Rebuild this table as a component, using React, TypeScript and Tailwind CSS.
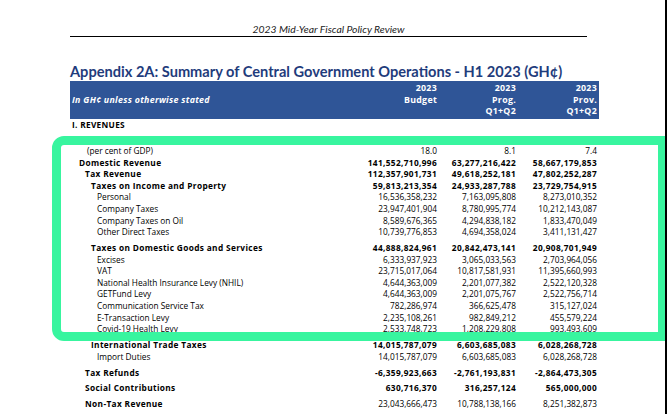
import React from "react"

type Row = {
    label: string
    indent: string
    bold?: boolean
    boldNums?: boolean
    gap?: boolean
    values: [string, string, string]
}

const rows: Row[] = [
    { label: "(per cent of GDP)", indent: "pl-[17px]", values: ["18.0", "8.1", "7.4"] },
    { label: "Domestic Revenue", indent: "pl-[9px]", bold: true, boldNums: true, values: ["141,552,710,996", "63,277,216,422", "58,667,179,853"] },
    { label: "Tax Revenue", indent: "pl-[15px]", bold: true, boldNums: true, values: ["112,357,901,731", "49,618,252,181", "47,802,252,287"] },
    { label: "Taxes on Income and Property", indent: "pl-[21px]", bold: true, boldNums: true, values: ["59,813,213,354", "24,933,287,788", "23,729,754,915"] },
    { label: "Personal", indent: "pl-[27px]", values: ["16,536,358,232", "7,163,095,808", "8,273,010,352"] },
    { label: "Company Taxes", indent: "pl-[27px]", values: ["23,947,401,904", "8,780,995,774", "10,212,143,087"] },
    { label: "Company Taxes on Oil", indent: "pl-[27px]", values: ["8,589,676,365", "4,294,838,182", "1,833,470,049"] },
    { label: "Other Direct Taxes", indent: "pl-[27px]", values: ["10,739,776,853", "4,694,358,024", "3,411,131,427"] },
    { label: "Taxes on Domestic Goods and Services", indent: "pl-[21px]", bold: true, boldNums: true, gap: true, values: ["44,888,824,961", "20,842,473,141", "20,908,701,949"] },
    { label: "Excises", indent: "pl-[27px]", values: ["6,333,937,923", "3,065,033,563", "2,703,964,056"] },
    { label: "VAT", indent: "pl-[27px]", values: ["23,715,017,064", "10,817,581,931", "11,395,660,993"] },
    { label: "National Health Insurance Levy (NHIL)", indent: "pl-[27px]", values: ["4,644,363,009", "2,201,077,382", "2,522,120,328"] },
    { label: "GETFund Levy", indent: "pl-[27px]", values: ["4,644,363,009", "2,201,075,767", "2,522,756,714"] },
    { label: "Communication Service Tax", indent: "pl-[27px]", values: ["782,286,974", "366,625,478", "315,127,024"] },
    { label: "E-Transaction Levy", indent: "pl-[27px]", values: ["2,235,108,261", "982,849,212", "455,579,224"] },
    { label: "Covid-19 Health Levy", indent: "pl-[27px]", values: ["2,533,748,723", "1,208,229,808", "993,493,609"] },
    { label: "International Trade Taxes", indent: "pl-[21px]", bold: true, boldNums: true, gap: true, values: ["14,015,787,079", "6,603,685,083", "6,028,268,728"] },
    { label: "Import Duties", indent: "pl-[27px]", values: ["14,015,787,079", "6,603,685,083", "6,028,268,728"] },
    { label: "Tax Refunds", indent: "pl-[15px]", bold: true, boldNums: true, gap: true, values: ["-6,359,923,663", "-2,761,193,831", "-2,864,473,305"] },
    { label: "Social Contributions", indent: "pl-[15px]", bold: true, boldNums: true, gap: true, values: ["630,716,370", "316,257,124", "565,000,000"] },
    { label: "Non-Tax Revenue", indent: "pl-[15px]", bold: true, gap: true, values: ["23,043,666,473", "10,788,138,166", "8,251,382,873"] },
]

export default function App() {
    return (
        <div className="relative w-[667px] h-[414px] overflow-hidden bg-white font-['Open_Sans',sans-serif] text-black">
            <div className="ml-[70px] w-[517px] pt-[23px]">
                <div className="text-center font-['Lato',sans-serif] italic text-[10.4px] leading-[13px] text-[#222]">
                    2023 Mid-Year Fiscal Policy Review
                </div>
                <div className="h-px bg-black" />
            </div>

            <div className="ml-[70px] w-[529px]">
                <h1 className="mt-[25px] font-['Lato',sans-serif] font-bold text-[14.6px] leading-[19px] text-[#1f3c7c] whitespace-nowrap">
                    Appendix 2A: Summary of Central Government Operations - H1 2023 (GH¢)
                </h1>

                {/* blue header band */}
                <div className="h-[38px] bg-[#2f5597] text-white font-bold text-[8.8px] tracking-[0.3px] leading-[11.5px] grid grid-cols-[287px_80px_79px_81px] items-center pt-[1px] pr-[2px]">
                    <div className="pl-[2px] italic">In GH¢ unless otherwise stated</div>
                    <div className="text-right">
                        <div>2023</div>
                        <div>Budget</div>
                        <div>&nbsp;</div>
                    </div>
                    <div className="text-right">
                        <div>2023</div>
                        <div>Prog.</div>
                        <div>Q1+Q2</div>
                    </div>
                    <div className="text-right">
                        <div>2023</div>
                        <div>Prov.</div>
                        <div>Q1+Q2</div>
                    </div>
                </div>

                <div className="pl-[2px] h-[12px] leading-[12px] text-[8.3px] tracking-[0.3px] font-bold">I. REVENUES</div>

                <div className="mt-[14px]">
                    {rows.map((r) => (
                        <div
                            key={r.label}
                            className={`grid grid-cols-[287px_80px_79px_81px] h-[11.6px] leading-[11.6px] text-[8.3px] whitespace-nowrap ${r.gap ? "mt-[4.3px]" : ""}`}
                        >
                            <div className={`${r.indent} ${r.bold ? "font-bold tracking-[0.35px]" : ""}`}>{r.label}</div>
                            {r.values.map((v, i) => (
                                <div key={i} className={`text-right ${r.boldNums ? "font-bold tracking-[0.35px]" : ""}`}>
                                    {v}
                                </div>
                            ))}
                        </div>
                    ))}
                </div>
            </div>

            {/* highlight frame */}
            <div className="absolute left-[52px] top-[136px] right-0 h-[205px] border-[9px] border-[#38f59f] rounded-l-[12px]" />
            <div className="absolute top-0 right-0 w-[2px] h-full bg-black" />
        </div>
    )
}
